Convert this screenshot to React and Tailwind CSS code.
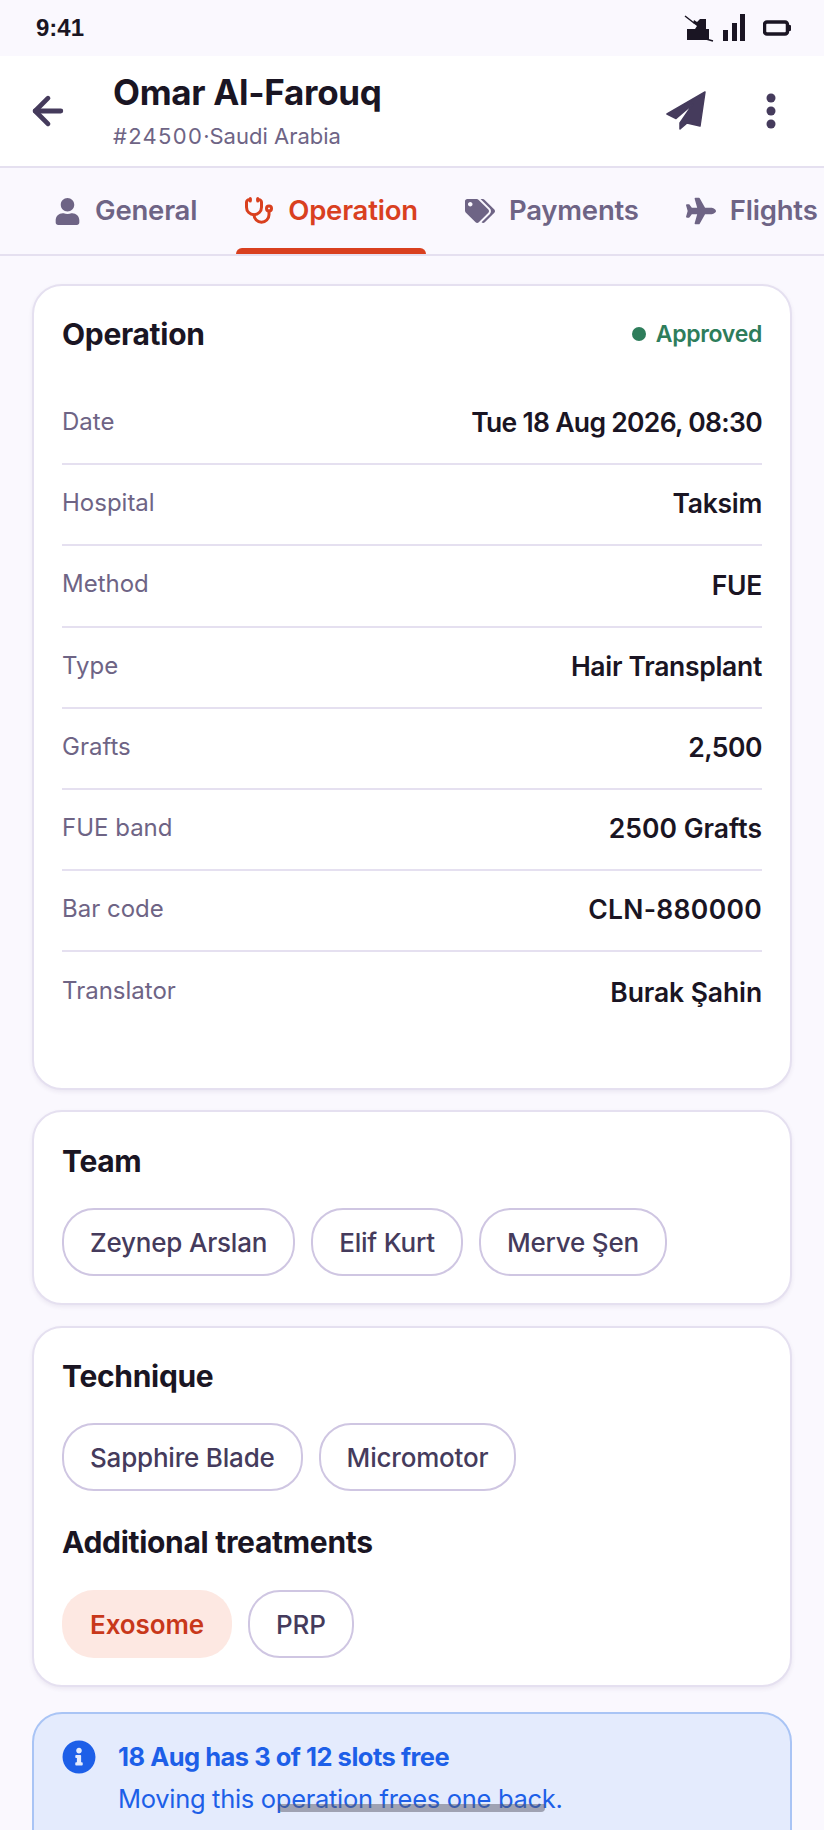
import React from "react";
import { ArrowLeft, Stethoscope } from "lucide-react";
import { FaUser, FaTags, FaPlane, FaInfoCircle } from "react-icons/fa";

const font = { fontFamily: "Inter, 'Noto Sans', sans-serif" };

const rows = [
  ["Date", "Tue 18 Aug 2026, 08:30", "tracking-[-0.7px]"],
  ["Hospital", "Taksim", "tracking-[-0.3px]"],
  ["Method", "FUE", "tracking-[-0.3px]"],
  ["Type", "Hair Transplant", "tracking-[-0.3px]"],
  ["Grafts", "2,500", "tracking-[-0.5px]"],
  ["FUE band", "2500 Grafts", "tracking-[0px]"],
  ["Bar code", "CLN-880000", "tracking-[0.3px]"],
  ["Translator", "Burak Şahin", "tracking-[-0.1px]"],
];

const Chip = ({ children, active }) => (
  <span
    className={
      active
        ? "flex h-[68px] items-center rounded-[32px] bg-[#fde8e2] px-7 text-[26px] font-semibold tracking-[-0.1px] text-[#c8381a]"
        : "flex h-[68px] items-center rounded-[32px] border-2 border-[#cfc6e2] px-[26px] text-[26px] font-medium tracking-[-0.2px] text-[#453b5c]"
    }
  >
    {children}
  </span>
);

const Card = ({ children, className }) => (
  <section
    className={
      "rounded-[30px] border-2 border-[#e5e0f0] bg-white px-[28px] shadow-[0_2px_4px_rgba(60,40,100,0.08)] " +
      className
    }
  >
    {children}
  </section>
);

const Tab = ({ icon, label, active }) => (
  <div
    className={
      "relative flex h-full shrink-0 items-center gap-[14px] text-[27.500px] font-semibold tracking-[-0.2px] " +
      (active ? "text-[#d9401f]" : "text-[#6e6485]")
    }
  >
    {icon}
    <span>{label}</span>
    {active && (
      <div className="absolute -left-2 -right-2 bottom-0 h-[6px] rounded-t-lg bg-[#d9401f]" />
    )}
  </div>
);

const heading = "text-[30px] font-bold leading-9 tracking-[-0.3px]";

export default function App() {
  return (
    <div
      className="relative h-[1830px] w-[824px] overflow-hidden bg-[#faf8fe] text-[#1a1523]"
      style={font}
    >
      {/* status bar */}
      <div className="flex h-14 items-center justify-between pl-9 pr-[33px]">
        <span className="text-[24px] font-bold" style={{ fontFamily: "'Liberation Sans', sans-serif" }}>
          9:41
        </span>
        <div className="flex items-center">
          <svg width="30" height="28" viewBox="0 0 30 28" fill="#1a1523">
            <path d="M3 15h8l2-3-4-3 1-3 3 2 3-3h6v10h3v11H3z" />
            <path d="M1 2l9 7M22 25l7 2" stroke="#1a1523" strokeWidth="1.5" />
          </svg>
          <svg className="ml-[9px]" width="22" height="28" viewBox="0 0 22 28" fill="#1a1523">
            <rect x="0" y="16" width="5" height="11" />
            <rect x="9" y="9" width="5" height="18" />
            <rect x="17" y="0" width="5" height="27" />
          </svg>
          <svg className="ml-[18px]" width="28" height="16" viewBox="0 0 28 16" fill="none">
            <rect x="1.500" y="2" width="23" height="12" rx="2.500" stroke="#1a1523" strokeWidth="3.500" />
            <rect x="25" y="5" width="3" height="6" rx="1" fill="#1a1523" />
          </svg>
        </div>
      </div>

      {/* header */}
      <header className="flex h-[112px] items-center border-b-2 border-[#e5e0f0] bg-white pl-[26px] pr-[48px]">
        <ArrowLeft size={44} strokeWidth={2.6} color="#453b5c" />
        <div className="ml-[43px] flex-1">
          <h1 className="text-[35px] font-bold leading-[40px] tracking-[-0.3px]">Omar Al-Farouq</h1>
          <p className="mt-[10px] flex text-[22px] leading-7 text-[#6e6485]">
            <span className="tracking-[1.300px]">#24500</span>
            <span>·</span>
            <span>Saudi Arabia</span>
          </p>
        </div>
        <svg width="42" height="42" viewBox="0 0 42 42" fill="#453b5c" stroke="#453b5c" strokeWidth="1.5" strokeLinejoin="round">
          <path d="M39 2L1 24L10 28.500L27 14L14 33L14 39L21 33L34 36Z" />
        </svg>
        <svg className="ml-[58px]" width="10" height="36" viewBox="0 0 10 36" fill="#453b5c">
          <circle cx="5" cy="5" r="4.500" />
          <circle cx="5" cy="18" r="4.500" />
          <circle cx="5" cy="31" r="4.500" />
        </svg>
      </header>

      {/* tabs */}
      <nav className="flex h-[88px] gap-[47px] overflow-hidden border-b-2 border-[#e5e0f0] pl-[54px]">
        <Tab icon={<FaUser size={27} />} label="General" />
        <Tab icon={<Stethoscope size={30} strokeWidth={2.4} />} label="Operation" active />
        <Tab icon={<FaTags size={30} />} label="Payments" />
        <Tab icon={<FaPlane size={30} />} label="Flights" />
      </nav>

      <main className="flex flex-col px-[32px] pt-[28px]">
        <Card className="h-[806px]">
          <div className="flex h-[98px] items-center justify-between pb-[2px]">
            <h2 className={heading}>Operation</h2>
            <span className="flex items-center gap-[10px] text-[23px] font-semibold tracking-[-0.3px] text-[#2e7d5b]">
              <span className="size-[14px] rounded-full bg-[#2e7d5b]" />
              Approved
            </span>
          </div>
          {rows.map(([label, value, spacing], i) => (
            <div
              key={label}
              className={
                "flex h-[81.200px] items-center justify-between pb-[1px] " +
                (i < rows.length - 1 ? "border-b-2 border-[#e5e0f0]" : "")
              }
            >
              <span className="pb-[2px] text-[24px] text-[#6e6485]">{label}</span>
              <span className={"text-[26.500px] font-semibold " + spacing}>{value}</span>
            </div>
          ))}
        </Card>

        <Card className="mt-5 h-[195px] pt-[31px]">
          <h2 className={heading}>Team</h2>
          <div className="mt-[29px] flex gap-4">
            <Chip>Zeynep Arslan</Chip>
            <Chip>Elif Kurt</Chip>
            <Chip>Merve Şen</Chip>
          </div>
        </Card>

        <Card className="mt-[21px] h-[361px] pt-[30px]">
          <h2 className={heading}>Technique</h2>
          <div className="mt-[29px] flex gap-4">
            <Chip>Sapphire Blade</Chip>
            <Chip>Micromotor</Chip>
          </div>
          <h2 className={"mt-[33px] " + heading}>Additional treatments</h2>
          <div className="mt-[30px] flex gap-4">
            <Chip active>Exosome</Chip>
            <Chip>PRP</Chip>
          </div>
        </Card>

        <section className="mt-[25px] flex h-[160px] gap-[22px] rounded-[30px] border-2 border-[#a9c4f5] bg-[#e4ebfd] px-[28px] pt-[25px] text-[#1d5fe8]">
          <FaInfoCircle size={34} className="mt-[1px] shrink-0" />
          <div>
            <p className="text-[25.500px] font-bold leading-9 tracking-[-0.5px]">18 Aug has 3 of 12 slots free</p>
            <p className="mt-[6px] text-[25.500px] leading-9 tracking-[-0.3px]">Moving this operation frees one back.</p>
          </div>
        </section>
      </main>

      {/* gesture bar */}
      <div className="absolute bottom-[18px] left-[278px] h-2 w-[267px] rounded-b bg-[#5a5a6a]/50" />
    </div>
  );
}
